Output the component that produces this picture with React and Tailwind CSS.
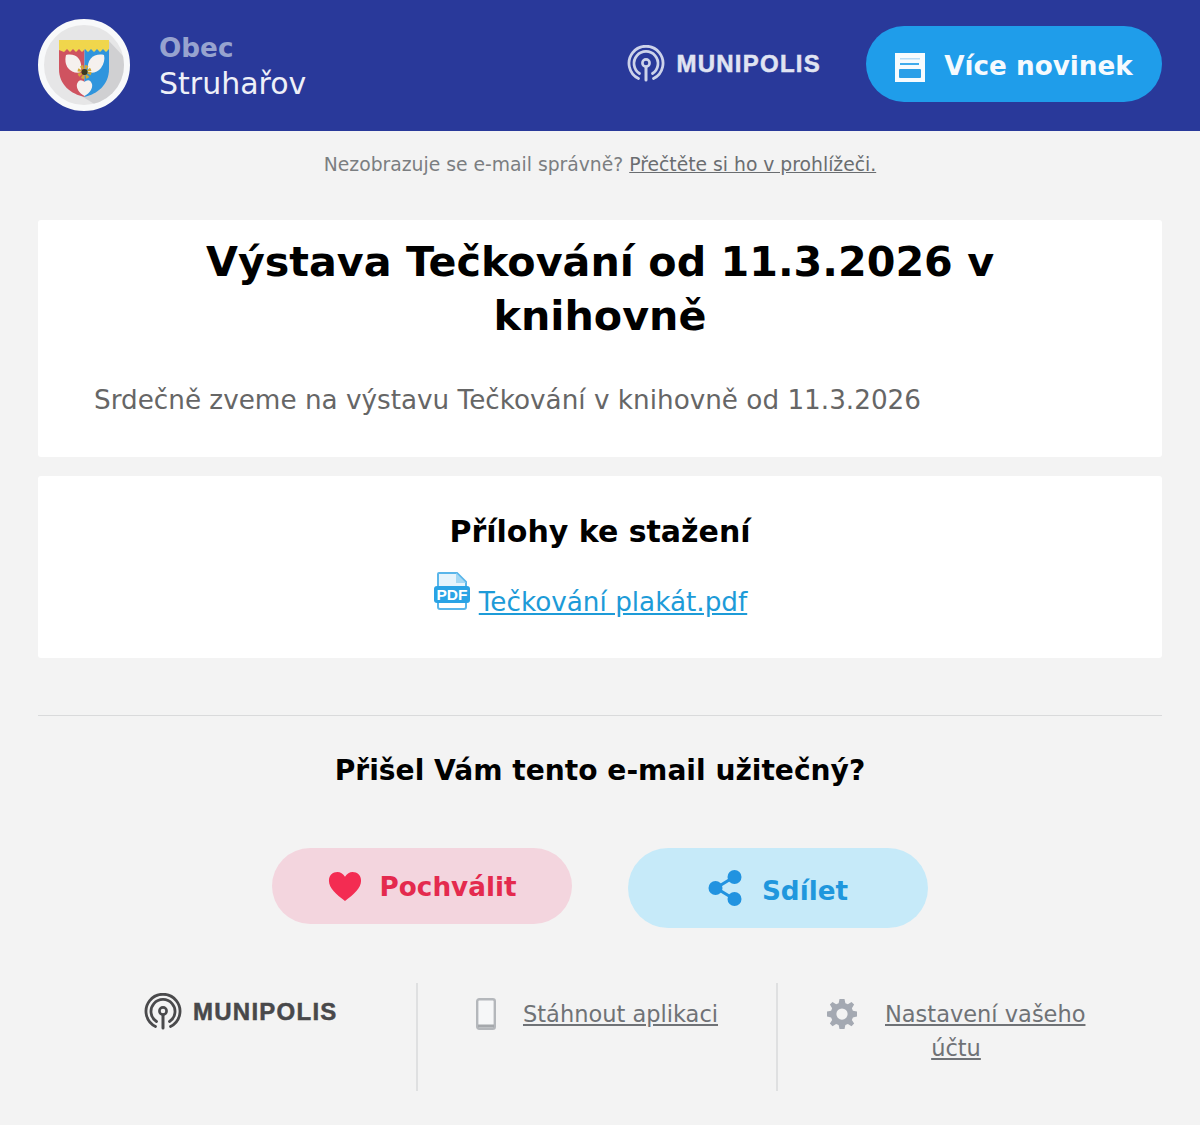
const F = { fontFamily: '"DejaVu Sans", sans-serif' };

function Signal({ color, size = 38 }) {
  return (
    <svg width={size} height={size} viewBox="0 0 38 38" fill="none" stroke={color} strokeLinecap="round">
      <path d="M11.5 33.5A17 17 0 1 1 26.5 33.5" strokeWidth="2.8" />
      <path d="M12.5 28.5A12 12 0 1 1 25.5 28.5" strokeWidth="2.8" />
      <circle cx="19" cy="18" r="3.6" strokeWidth="2.6" />
      <path d="M19 22V35" strokeWidth="3" />
    </svg>
  );
}

function Logo({ color, size, text }) {
  return (
    <div className="flex items-center gap-[11px]">
      <Signal color={color} size={size} />
      <span
        className="font-bold text-[24px] leading-none tracking-[1.25px]"
        style={{ fontFamily: '"Liberation Sans", sans-serif', color: text, WebkitTextStroke: '0.5px currentColor' }}
      >
        MUNIPOLIS
      </span>
    </div>
  );
}

function Crest() {
  return (
    <div className="relative -mt-[2px] w-[92px] h-[92px] rounded-full bg-[#e6e6e7] border-[6px] border-[#f8f9fa] overflow-hidden shrink-0">
      <svg width="80" height="80" viewBox="0 0 80 80" className="absolute left-0 top-0">
        <path d="M65 16L80 32V80H52L26 64Z" fill="#d0d0d2" />
        <path d="M15 15H40.5V72C27 69 15 60 15 44Z" fill="#cf5360" />
        <path d="M40.5 15H65V44C65 60 53 69 40.5 72Z" fill="#2f95dd" />
        <path d="M15 15H65V24L62 27L59 24L56 27L53 24L50 27L47 24L44 27L41 24L38 27L35 24L32 27L29 24L26 27L23 24L20 27L15 25Z" fill="#f0d64c" />
        <path d="M22 30C31 28 39 33 37 47C33 49 27 47 24 43C21 39 21 34 22 30Z" fill="#f5f1ee" />
        <path d="M60 30C51 28 42 33 44 47C48 49 54 47 57 43C60 39 61 34 60 30Z" fill="#f5f1ee" />
        <path d="M40.5 71C35 68 32 63 33 59C35 54 38 55 40.5 57C43 55 46 54 48 59C49 63 46 68 40.5 71Z" fill="#f5f1ee" />
        <circle cx="40.5" cy="47" r="5" fill="none" stroke="#d2a838" strokeWidth="4" strokeDasharray="2.5 1.4" />
        <circle cx="40.5" cy="47" r="3" fill="#3d3a20" />
      </svg>
    </div>
  );
}

function NewsIcon() {
  return (
    <svg width="30" height="29" viewBox="0 0 30 29">
      <path d="M0 0H30V29H0Z" fill="#f6fbfe" />
      <path d="M5 5H25V6.5H5Z" fill="#b7dcf6" />
      <path d="M5 10H24V12H5Z" fill="#3fabec" />
      <rect x="4" y="16" width="22" height="9" rx="1" fill="#2a9fe8" />
    </svg>
  );
}

function PdfIcon() {
  return (
    <svg width="36" height="38" viewBox="0 0 36 38" fill="none">
      <path d="M4 16V2C4 1.5 4.5 1 5 1H23L32 10V16" fill="#e6f4fc" stroke="#5ab6ea" strokeWidth="2" />
      <path d="M4 30V35C4 36 5 37 6 37H30C31 37 32 36 32 35V30" stroke="#5ab6ea" strokeWidth="2" />
      <path d="M22 1V11H32Z" fill="#a4d8f4" />
      <rect x="0" y="14" width="36" height="17" rx="3" fill="#2aa3e5" />
      <text x="18" y="28" textAnchor="middle" fontFamily="Liberation Sans, sans-serif" fontWeight="700" fontSize="15.5" fill="#fff">PDF</text>
    </svg>
  );
}

function Footer() {
  return (
    <div className="ml-[18px] mt-[55px] pb-[34px] grid grid-cols-[360px_360px_1fr] text-[22.5px] leading-[34px] text-[#6f7276]">
      <div className="h-[108px] pt-[10px] pl-[88px]">
        <Logo color="#4a4a4c" size={38} text="#48484a" />
      </div>
      <div className="h-[108px] border-l-2 border-[#dfe0e1] pt-[14px] flex justify-center gap-[27px]">
        <svg width="20" height="32" viewBox="0 0 20 32" className="mt-[1px]" fill="none">
          <rect x="1.2" y="1.2" width="17.6" height="29.6" rx="2" fill="#f6f7f8" stroke="#b4b7bb" strokeWidth="2.4" />
          <path d="M2 28H18" stroke="#a5a8ac" strokeWidth="3" />
        </svg>
        <a className="underline">Stáhnout aplikaci</a>
      </div>
      <div className="h-[108px] border-l-2 border-[#dfe0e1] pt-[14px] pl-[49px] flex items-start gap-[28px]">
        <svg width="30" height="30" viewBox="0 0 24 24" className="mt-[2px]" fill="#a4a9b2">
          <path fillRule="evenodd" d="M10 0h4l.7 3.3 2 .8L19.6 2.3l2.1 2.1-1.8 2.9.8 2L24 10v4l-3.3.7-.8 2 1.8 2.9-2.1 2.1-2.9-1.8-2 .8L14 24h-4l-.7-3.3-2-.8-2.9 1.8-2.1-2.1 1.8-2.9-.8-2L0 14v-4l3.3-.7.8-2-1.8-2.9 2.1-2.1 2.9 1.8 2-.8ZM12 7.5a4.5 4.5 0 1 0 0 9 4.5 4.5 0 0 0 0-9Z" />
        </svg>
        <a className="underline text-center w-[142px]">Nastavení&nbsp;vašeho účtu</a>
      </div>
    </div>
  );
}

export default function App() {
  return (
    <div className="w-[1200px] min-h-[1125px] bg-[#f3f3f3]" style={F}>
      <header className="h-[131px] bg-[#29399a] pl-[38px] pr-[38px] flex items-center">
        <Crest />
        <div className="ml-[29px] mt-0">
          <div className="text-[26.25px] leading-[36px] font-bold text-[#97a3cf]">Obec</div>
          <div className="text-[30px] leading-[36px] text-[#eef0f8]">Struhařov</div>
        </div>
        <div className="ml-auto mr-[45px] mt-[-4px]">
          <Logo color="#cdd3ea" size={38} text="#e0e4f2" />
        </div>
        <a className="-mt-[4px] w-[296px] h-[76px] pt-[7px] rounded-full bg-[#1f9dea] flex items-center justify-center gap-[19px]">
          <NewsIcon />
          <span className="text-[26.25px] font-bold text-[#f5fafe]">Více novinek</span>
        </a>
      </header>

      <p className="h-[89px] pt-[20px] text-center text-[18.75px] leading-[28px] text-[#7b7e81]">
        Nezobrazuje se e-mail správně? <a className="underline text-[#6a6d70]">Přečtěte si ho v prohlížeči.</a>
      </p>

      <main className="mx-[38px]">
        <section className="h-[237px] bg-white rounded-[3px] pt-[15px]">
          <h1 className="text-[41.25px] leading-[54px] font-bold text-black text-center px-[100px]">
            Výstava Tečkování od 11.3.2026 v knihovně
          </h1>
          <p className="mt-[37px] pl-[56px] text-[26.25px] leading-[40px] text-[#666666]">
            Srdečně zveme na výstavu Tečkování v knihovně od 11.3.2026
          </p>
        </section>

        <section className="mt-[19px] h-[182px] bg-white rounded-[3px] pt-[36px] flex flex-col items-center">
          <h2 className="text-[30px] leading-[40px] font-bold text-black">Přílohy ke stažení</h2>
          <div className="mt-[20px] mr-[19px] flex items-start gap-[9px]">
            <PdfIcon />
            <a className="mt-[10px] text-[26.25px] leading-[40px] underline text-[#1d9bd8]">Tečkování plakát.pdf</a>
          </div>
        </section>

        <div className="mt-[57px] h-px bg-[#d9dadb]" />

        <h2 className="mt-[35px] text-[28.125px] leading-[40px] font-bold text-black text-center">Přišel Vám tento e-mail užitečný?</h2>

        <div className="mt-[57px] flex justify-center items-start gap-[56px]">
          <a className="w-[300px] h-[76px] rounded-full bg-[#f3d5de] flex items-center justify-center gap-[18px]">
            <svg width="34" height="31" viewBox="0 0 36 32" preserveAspectRatio="none">
              <path d="M18 31C9 24 1 18 1 10C1 4 5 1 10 1C13 1 16 3 18 6C20 3 23 1 26 1C31 1 35 4 35 10C35 18 27 24 18 31Z" fill="#f32c52" />
            </svg>
            <span className="mt-[3px] text-[26.25px] font-bold text-[#e42a4e]">Pochválit</span>
          </a>
          <a className="w-[300px] h-[80px] rounded-full bg-[#c6eaf9] flex items-center justify-center gap-[20px]">
            <svg width="34" height="36" viewBox="0 0 34 36">
              <path d="M8 18L26 7M8 18L26 29" stroke="#2193e0" strokeWidth="3.2" />
              <circle cx="7.5" cy="18" r="7" fill="#2193e0" />
              <circle cx="26.5" cy="7" r="7" fill="#2193e0" />
              <circle cx="26.5" cy="29" r="7" fill="#2193e0" />
            </svg>
            <span className="mt-[7px] text-[26.25px] font-bold text-[#1f97dd]">Sdílet</span>
          </a>
        </div>

        <Footer />
      </main>
    </div>
  );
}
